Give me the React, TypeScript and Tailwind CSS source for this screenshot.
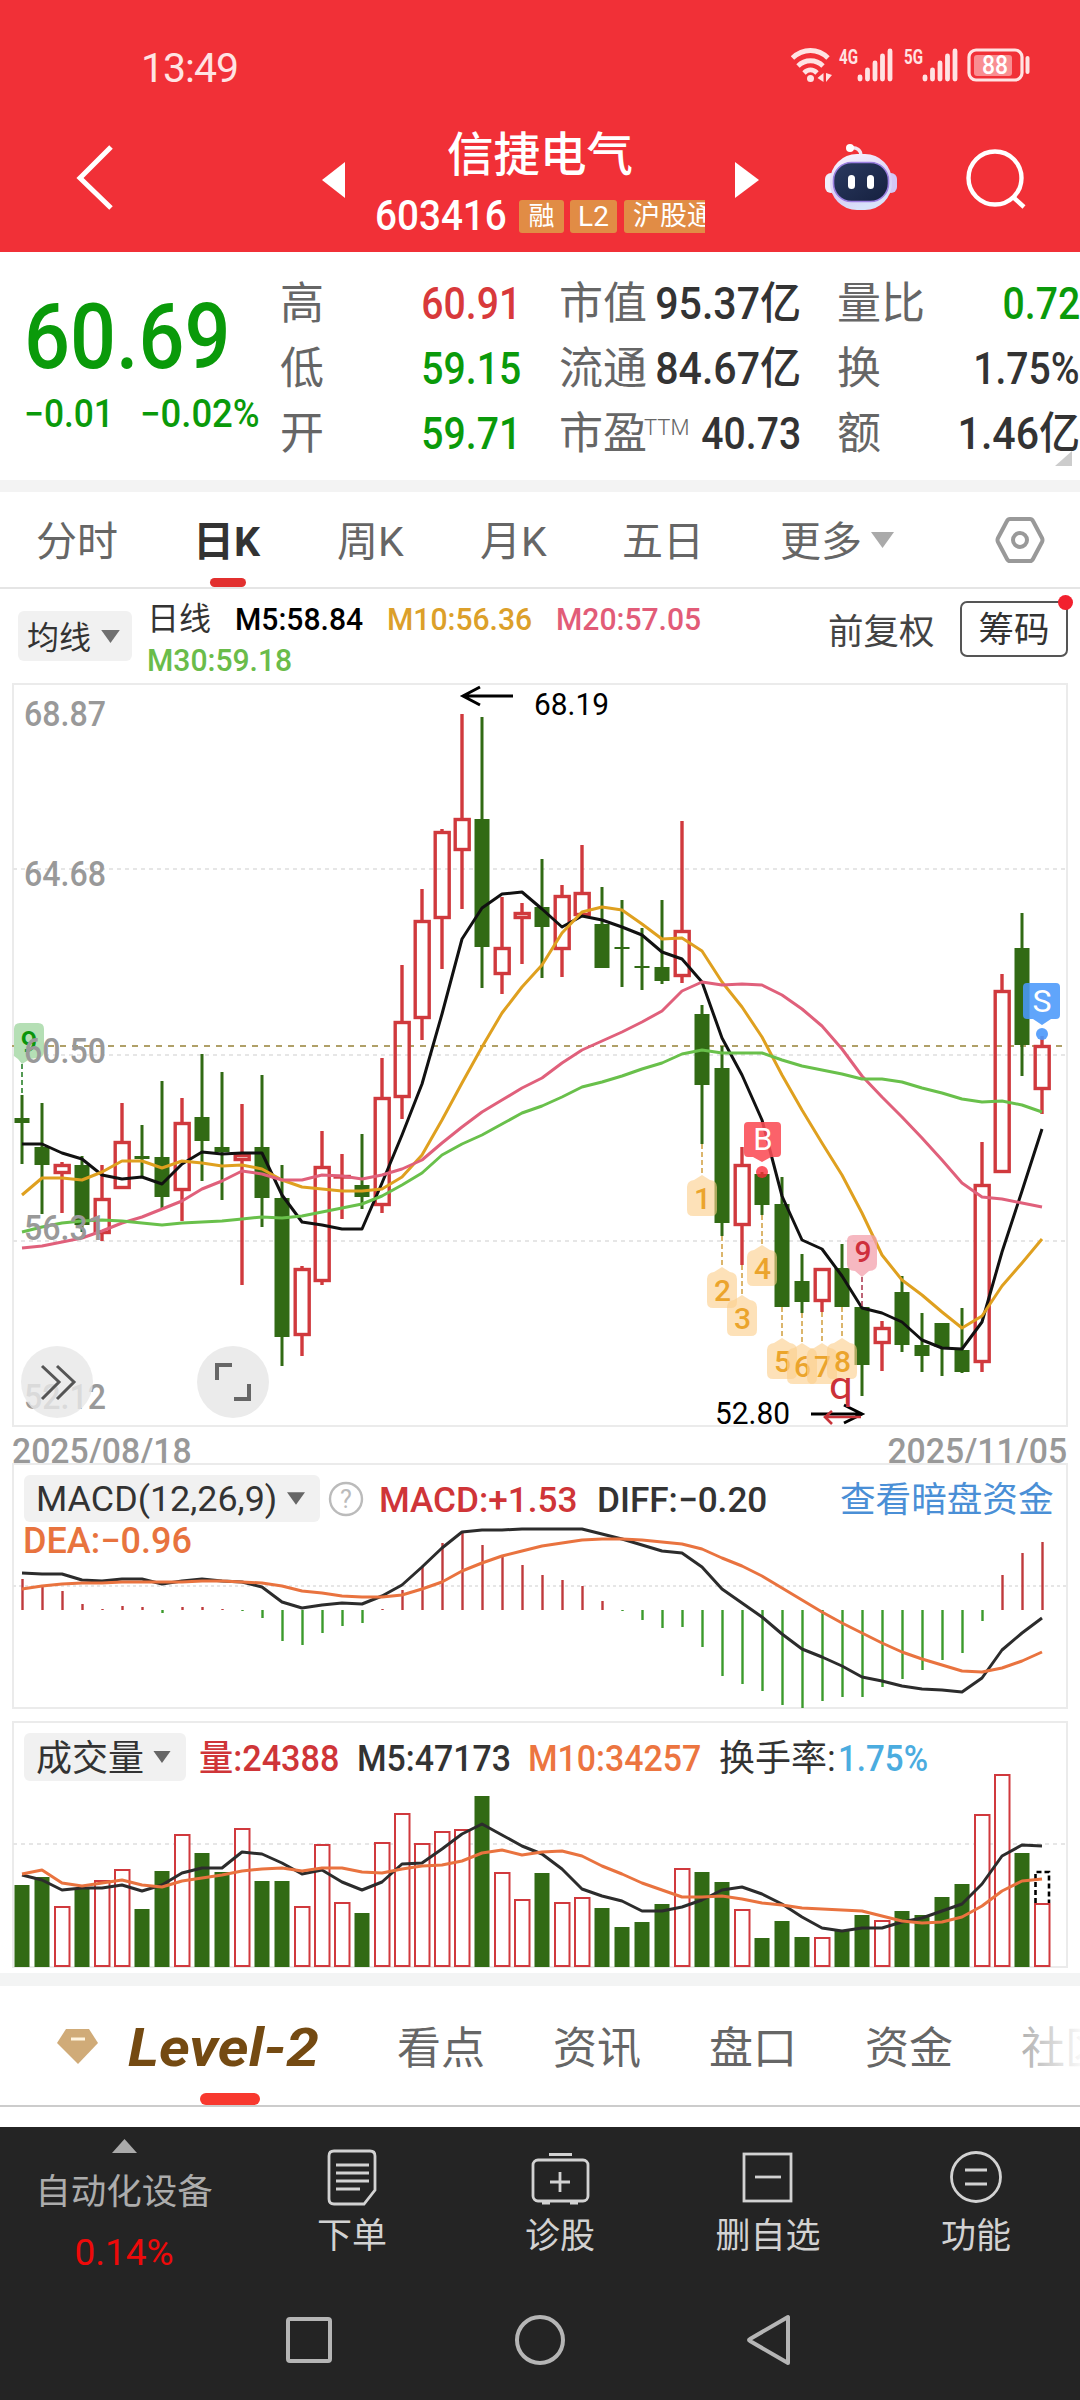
import React from 'react';

type Candle = [number, number, number, number, 0 | 1];

// high, body top, body bottom, low, 1 = up / 0 = down
const CANDLES: Candle[] = [
  [1095, 1118, 1123, 1164, 0], [1103, 1147, 1165, 1214, 0], [1162, 1164, 1174, 1213, 1], [1156, 1165, 1225, 1232, 0],
  [1165, 1198, 1234, 1241, 1], [1103, 1141, 1189, 1189, 1], [1125, 1156, 1159, 1177, 0], [1081, 1157, 1197, 1209, 0],
  [1098, 1122, 1191, 1221, 1], [1054, 1117, 1141, 1181, 0], [1072, 1147, 1152, 1200, 0], [1104, 1154, 1161, 1285, 1],
  [1075, 1147, 1198, 1227, 0], [1165, 1198, 1337, 1366, 0], [1266, 1268, 1336, 1356, 1], [1131, 1166, 1282, 1285, 1],
  [1154, 1175, 1178, 1219, 1], [1134, 1185, 1197, 1209, 0], [1058, 1097, 1206, 1213, 1], [965, 1021, 1098, 1119, 1],
  [889, 920, 1019, 1040, 1], [829, 831, 919, 969, 1], [714, 818, 851, 909, 1], [717, 819, 947, 988, 0],
  [897, 947, 975, 994, 1], [903, 912, 919, 964, 1], [859, 907, 927, 978, 0], [885, 895, 950, 977, 1],
  [845, 892, 916, 916, 1], [887, 924, 968, 968, 0], [900, 947, 949, 987, 0], [928, 966, 968, 990, 0],
  [900, 967, 981, 984, 0], [821, 930, 977, 983, 1], [1005, 1014, 1085, 1144, 0], [1046, 1068, 1223, 1236, 0],
  [1147, 1164, 1226, 1265, 1], [1172, 1174, 1205, 1215, 0], [1177, 1204, 1307, 1307, 0], [1254, 1281, 1302, 1313, 0],
  [1268, 1268, 1302, 1312, 1], [1244, 1268, 1307, 1307, 0], [1307, 1307, 1365, 1396, 0], [1321, 1327, 1344, 1371, 1],
  [1276, 1292, 1345, 1352, 0], [1313, 1345, 1356, 1372, 0], [1323, 1323, 1347, 1376, 0], [1308, 1350, 1372, 1373, 0],
  [1142, 1184, 1363, 1372, 1], [974, 990, 1173, 1173, 1], [913, 948, 1045, 1076, 0], [1036, 1045, 1090, 1114, 1],
];

const MA5 = [1144, 1144, 1153, 1159, 1175, 1179, 1177, 1184, 1164, 1152, 1154, 1153, 1153, 1195, 1222, 1225, 1229, 1229, 1183, 1135, 1084, 1014, 939, 908, 894, 892, 909, 927, 916, 920, 927, 935, 952, 959, 982, 1038, 1075, 1120, 1196, 1240, 1249, 1276, 1308, 1313, 1322, 1340, 1348, 1349, 1322, 1252, 1191, 1129];
const MA10 = [1195, 1178, 1178, 1180, 1172, 1161, 1161, 1168, 1161, 1163, 1166, 1165, 1169, 1180, 1187, 1189, 1191, 1191, 1189, 1177, 1155, 1120, 1083, 1047, 1013, 987, 965, 933, 912, 907, 910, 924, 939, 938, 951, 982, 1007, 1037, 1075, 1110, 1143, 1175, 1213, 1255, 1280, 1295, 1312, 1328, 1316, 1286, 1263, 1239];
const MA20 = [1248, 1246, 1242, 1238, 1231, 1223, 1217, 1209, 1201, 1189, 1181, 1171, 1174, 1180, 1180, 1175, 1176, 1179, 1175, 1169, 1160, 1143, 1127, 1112, 1100, 1088, 1078, 1063, 1050, 1041, 1032, 1022, 1011, 991, 982, 985, 984, 985, 995, 1009, 1026, 1049, 1076, 1097, 1117, 1138, 1160, 1183, 1197, 1199, 1203, 1207];
const MA30 = [1232, 1227, 1223, 1221, 1220, 1221, 1223, 1225, 1223, 1222, 1221, 1219, 1217, 1218, 1216, 1212, 1208, 1204, 1196, 1185, 1173, 1155, 1144, 1135, 1124, 1113, 1106, 1097, 1087, 1082, 1076, 1069, 1063, 1054, 1050, 1053, 1053, 1053, 1060, 1066, 1070, 1074, 1079, 1079, 1082, 1088, 1093, 1099, 1102, 1101, 1105, 1112];

const MACD = [1579, 1587, 1591, 1604, 1609, 1606, 1607, 1613, 1607, 1607, 1609, 1611, 1618, 1641, 1645, 1633, 1626, 1623, 1609, 1590, 1567, 1543, 1533, 1545, 1557, 1565, 1575, 1580, 1586, 1601, 1611, 1620, 1628, 1627, 1647, 1676, 1684, 1691, 1705, 1708, 1701, 1697, 1697, 1687, 1679, 1670, 1660, 1653, 1621, 1575, 1553, 1542];
const DIFF = [1573, 1574, 1574, 1580, 1581, 1579, 1579, 1584, 1581, 1579, 1581, 1582, 1587, 1602, 1608, 1605, 1603, 1604, 1596, 1585, 1567, 1548, 1532, 1530, 1530, 1529, 1529, 1529, 1529, 1534, 1539, 1545, 1551, 1553, 1567, 1589, 1603, 1617, 1634, 1649, 1657, 1666, 1677, 1681, 1686, 1689, 1690, 1692, 1678, 1650, 1633, 1618];
const DEA = [1589, 1586, 1584, 1583, 1583, 1582, 1582, 1582, 1582, 1581, 1581, 1582, 1583, 1586, 1591, 1593, 1596, 1597, 1597, 1595, 1589, 1582, 1571, 1563, 1556, 1551, 1546, 1543, 1540, 1539, 1539, 1540, 1542, 1544, 1549, 1558, 1566, 1576, 1588, 1600, 1612, 1623, 1633, 1643, 1652, 1659, 1665, 1671, 1672, 1668, 1661, 1652];

const VOLUME = [1885, 1877, 1907, 1888, 1881, 1870, 1909, 1871, 1835, 1853, 1872, 1829, 1881, 1881, 1907, 1845, 1903, 1913, 1843, 1814, 1844, 1832, 1830, 1796, 1873, 1900, 1873, 1903, 1898, 1908, 1927, 1922, 1904, 1869, 1872, 1882, 1910, 1938, 1921, 1937, 1938, 1931, 1915, 1921, 1911, 1915, 1897, 1884, 1815, 1775, 1853, 1904];
const VOL5 = [1875, 1880, 1890, 1888, 1888, 1885, 1891, 1885, 1873, 1868, 1868, 1852, 1854, 1863, 1874, 1870, 1882, 1890, 1882, 1864, 1863, 1849, 1834, 1824, 1835, 1846, 1854, 1869, 1889, 1896, 1901, 1911, 1911, 1907, 1900, 1890, 1887, 1894, 1904, 1917, 1928, 1931, 1928, 1928, 1922, 1918, 1911, 1904, 1884, 1856, 1845, 1846];
const VOL10 = [1874, 1870, 1883, 1886, 1883, 1880, 1885, 1887, 1881, 1878, 1875, 1871, 1869, 1868, 1871, 1868, 1868, 1872, 1873, 1869, 1866, 1865, 1861, 1853, 1850, 1855, 1852, 1851, 1856, 1866, 1874, 1883, 1890, 1897, 1897, 1896, 1899, 1903, 1905, 1908, 1909, 1910, 1911, 1916, 1921, 1923, 1922, 1917, 1906, 1891, 1881, 1879];

// nine-turn count tags: label, candle index, tag tip
const COUNTS: [string, number, number][] = [
  ['1', 34, 1175], ['2', 35, 1267], ['3', 36, 1295], ['4', 37, 1245],
  ['5', 38, 1338], ['6', 39, 1343], ['7', 40, 1343], ['8', 41, 1338],
];

const AXIS: [string, number][] = [['68.87', 726], ['64.68', 886], ['60.50', 1063], ['56.31', 1240], ['52.12', 1409]];

const RED = '#d0393d';
const GREEN = '#316a14';

const cx = (i: number) => 22 + i * 20;
const toPoints = (ys: number[]) => ys.map((y, i) => `${cx(i)},${y}`).join(' ');

const Curve: React.FC<{ data: number[]; color: string }> = ({ data, color }) => (
  <polyline points={toPoints(data)} fill="none" stroke={color} strokeWidth="3" strokeLinejoin="round" />
);

const Caret: React.FC<{ className?: string }> = ({ className }) => (
  <svg className={className} viewBox="0 0 20 14"><path d="M0 0h20L10 14z" fill="currentColor" /></svg>
);

const StatusBar = () => (
  <div className="h-[112px] flex items-start pl-[141px] pr-[49px] pt-[46px] text-[#ffe3e3]">
    <span className="text-[41px] leading-[42px] w-[120px] mt-px tracking-[-1px]">13:49</span>
    <div className="flex ml-auto mt-[2px]">
      <svg className="w-[44px] h-[34px] mr-[2px]" viewBox="0 0 44 34" fill="none" stroke="currentColor" strokeWidth="4.800">
        <path d="M1.500 10C12 0 27 0 37 10M7 18C14 11 25 11 32 18M13 25C17 21 22 21 26 25" />
        <circle cx="19.500" cy="30.500" r="3.500" fill="currentColor" stroke="none" />
        <path d="M32.500 25v9l-6-4zM35 25v9l6-7z" fill="currentColor" stroke="none" />
      </svg>
      <Signal label="4G" />
      <Signal label="5G" />
      <svg className="w-[64px] h-[34px]" viewBox="0 0 64 34" fill="none" stroke="currentColor" strokeWidth="3.200">
        <rect x="2" y="2" width="53" height="30" rx="7" />
        <rect x="7" y="7" width="38" height="21" rx="3" fill="#f98e91" stroke="none" />
        <path d="M60.500 10v14" strokeWidth="4" strokeLinecap="round" />
        <text x="28" y="26" textAnchor="middle" fontSize="25" fontWeight="500" textLength="26" lengthAdjust="spacingAndGlyphs" fill="#fff" stroke="none">88</text>
      </svg>
    </div>
  </div>
);

const Signal: React.FC<{ label: string }> = ({ label }) => (
  <svg className="w-[65px] h-[34px]" viewBox="0 0 65 34">
    <text x="2" y="15.500" fontSize="20" fontWeight="700" textLength="19" lengthAdjust="spacingAndGlyphs" fill="currentColor">{label}</text>
    <path d="M23 31v-2M30.500 31v-9M38 31v-16M45.500 31v-23M53 31v-28" stroke="currentColor" strokeWidth="4.800" strokeLinecap="round" />
  </svg>
);

const Header = () => (
  <div className="h-[140px] relative flex text-white">
    <svg className="w-[40px] h-[68px] ml-[75px] mt-[31px]" viewBox="0 0 40 68"><path d="M36 4L5 35l31 30" fill="none" stroke="currentColor" strokeWidth="5" /></svg>
    <svg className="w-[23px] h-[36px] ml-[207px] mt-[50px]" viewBox="0 0 23 36"><path d="M23 0v36L0 18z" fill="currentColor" /></svg>
    <div className="w-[390px] flex flex-col">
      <div className="text-[46.5px] leading-[50px] font-medium text-center mt-[18px]">信捷电气</div>
      <div className="flex items-center h-[34px] mt-[19px] pl-[30px] w-[360px] overflow-hidden whitespace-nowrap">
        <div className="w-[144px] shrink-0 text-[42px] leading-[34px] font-medium"><span className="inline-block origin-left scale-x-[.92]">603416</span></div>
        <div className="w-[45px] h-[33px] shrink-0 rounded-[3px] bg-[#e18c45] text-[26px] leading-[32px] text-center">融</div>
        <div className="w-[47px] h-[33px] shrink-0 rounded-[3px] bg-[#e18c45] text-[28px] leading-[33px] text-center ml-[6px]">L2</div>
        <div className="w-[100px] h-[33px] shrink-0 rounded-l-[3px] bg-[#e18c45] text-[27px] leading-[32px] pl-[9px] ml-[7px]">沪股通</div>
      </div>
    </div>
    <svg className="w-[24px] h-[36px] mt-[50px]" viewBox="0 0 24 36"><path d="M0 0v36l24-18z" fill="currentColor" /></svg>
    <svg className="w-[76px] h-[72px] ml-[64px] mt-[30px]" viewBox="0 0 76 72">
      <defs>
        <linearGradient id="shell" x1="0" y1="0" x2="0.4" y2="1"><stop offset="0" stopColor="#fbf7fd" /><stop offset="0.7" stopColor="#d9cdf6" /><stop offset="1" stopColor="#d8e2fa" /></linearGradient>
        <linearGradient id="face" x1="0" y1="0" x2="1" y2="1"><stop offset="0" stopColor="#2b3a60" /><stop offset="1" stopColor="#15203f" /></linearGradient>
      </defs>
      <path d="M38 14C38 8 34 5 27 6" fill="none" stroke="#f3e6f2" strokeWidth="3.400" strokeLinecap="round" />
      <circle cx="27" cy="6" r="4" fill="#fff" />
      <rect x="2" y="31" width="12" height="20" rx="6" fill="#f1effb" />
      <rect x="62" y="31" width="12" height="20" rx="6" fill="#d3c7f5" />
      <rect x="7" y="12" width="62" height="56" rx="27" fill="url(#shell)" />
      <rect x="10.500" y="20.500" width="55" height="39" rx="18" fill="url(#face)" stroke="#9b7fe0" strokeWidth="1.600" />
      <rect x="25" y="33" width="7" height="14" rx="3.500" fill="#fff" />
      <rect x="44" y="33" width="7" height="14" rx="3.500" fill="#fff" />
    </svg>
    <svg className="w-[64px] h-[64px] ml-[64px] mt-[36px]" viewBox="0 0 64 64" fill="none" stroke="currentColor" strokeWidth="4.400">
      <circle cx="32" cy="30" r="26.500" /><path d="M50 49l11 10" />
    </svg>
  </div>
);

const Quote: React.FC<{ label: string; value: string; color?: string; sup?: string }> = ({ label, value, color = 'text-[#333]', sup }) => (
  <div className="h-[65px] flex items-center justify-between whitespace-nowrap">
    <span className="text-[44px] leading-none text-[#666] -mr-[10px]">{label}{sup && <sup className="text-[22px] font-light top-[-14px] -ml-[3px]">{sup}</sup>}</span>
    <span className={`text-[44px] leading-none font-medium inline-block origin-right ${value.includes('亿') ? 'scale-x-[.935]' : 'scale-x-[.89]'} ${color}`}>{value}</span>
  </div>
);

const QuotePanel = () => (
  <div className="h-[228px] relative flex bg-white overflow-hidden">
    <div className="w-[280px] pl-[24px] text-[#0a9a0a] whitespace-nowrap">
      <div className="text-[91px] leading-[66px] font-medium mt-[52px] origin-left scale-x-[.89]">60.69</div>
      <div className="flex text-[38px] leading-[40px] mt-[24px] font-medium">
        <span className="w-[116px]"><span className="inline-block origin-left scale-x-[.93]">−0.01</span></span>
        <span className="inline-block origin-left scale-x-[.96]">−0.02%</span>
      </div>
    </div>
    <div className="w-[241px] pt-[19px]">
      <Quote label="高" value="60.91" color="text-[#d8393b]" />
      <Quote label="低" value="59.15" color="text-[#0a9a0a]" />
      <Quote label="开" value="59.71" color="text-[#0a9a0a]" />
    </div>
    <div className="w-[242px] ml-[38px] pt-[19px]">
      <Quote label="市值" value="95.37亿" />
      <Quote label="流通" value="84.67亿" />
      <Quote label="市盈" sup="TTM" value="40.73" />
    </div>
    <div className="w-[243px] shrink-0 ml-[36px] pt-[19px]">
      <Quote label="量比" value="0.72" color="text-[#0a9a0a]" />
      <Quote label="换" value="1.75%" />
      <Quote label="额" value="1.46亿" />
    </div>
    <svg className="absolute right-[8px] bottom-[14px] w-[17px] h-[15px]" viewBox="0 0 17 15"><path d="M17 0v15H0z" fill="#ccc" /></svg>
  </div>
);

const PeriodTabs = () => (
  <div className="h-[97px] flex items-center border-b-2 border-[#e5e5e5] bg-white text-[41px] text-[#666] pl-[36px] whitespace-nowrap leading-none">
    <span className="w-[158px] mt-[5px]">分时</span>
    <div className="w-[143px] h-full relative flex items-center font-bold text-[#333] pt-[5px]">
      <span className="-ml-px">日K</span>
      <div className="absolute left-[16px] bottom-0 w-[36px] h-[9px] rounded-[5px] bg-[#e2302f]" />
    </div>
    <span className="w-[143px] mt-[5px]">周K</span>
    <span className="w-[142px] mt-[5px]">月K</span>
    <span className="w-[158px] mt-[5px]">五日</span>
    <span className="w-[91px] mt-[5px]">更多</span>
    <Caret className="w-[23px] h-[18px] text-[#aaa]" />
    <svg className="w-[50px] h-[48px] ml-[101px]" viewBox="0 0 50 48" fill="none" stroke="#999" strokeWidth="4">
      <path d="M15 3h20q2 0 3 2l9 17q1 2 0 4l-9 17q-1 2-3 2H15q-2 0-3-2L3 26q-1-2 0-4l9-17q1-2 3-2z" />
      <circle cx="25" cy="24" r="7" />
    </svg>
  </div>
);

const MaLegend = () => (
  <div className="h-[94px] flex bg-white pl-[18px] whitespace-nowrap">
    <div className="w-[114px] h-[50px] mt-[22px] rounded-[6px] bg-[#f1f1f1] flex items-center pl-[9px] text-[32px] text-[#333]">
      <span className="mt-[3px]">均线</span><Caret className="w-[19px] h-[13px] ml-[10px] text-[#707070]" />
    </div>
    <div className="w-[696px] pl-[15px] pt-[10px] text-[32px] leading-[41px] font-medium">
      <div className="flex">
        <span className="w-[88px] font-normal text-[#333]">日线</span>
        <span className="w-[152px] text-black"><span className="inline-block origin-left scale-x-[.94]">M5:58.84</span></span>
        <span className="w-[169px] text-[#dca02a]"><span className="inline-block origin-left scale-x-[.94]">M10:56.36</span></span>
        <span className="text-[#e25c78]"><span className="inline-block origin-left scale-x-[.94]">M20:57.05</span></span>
      </div>
      <div className="text-[#6abc4a]"><span className="inline-block origin-left scale-x-[.94]">M30:59.18</span></div>
    </div>
    <span className="w-[132px] text-[35.500px] leading-[86px] text-[#444]">前复权</span>
    <div className="relative w-[108px] h-[56px] mt-[12px] border-2 border-[#555] rounded-[7px] text-[35.500px] leading-[54px] text-center text-[#333]">
      筹码
      <div className="absolute -right-[7px] -top-[8px] w-[15px] h-[15px] rounded-full bg-[#f2202e]" />
    </div>
  </div>
);

const KLineChart = () => (
  <svg className="block w-[1080px] h-[744px]" viewBox="0 683 1080 744">
    <rect x="13" y="684" width="1054" height="742" fill="none" stroke="#ebebeb" strokeWidth="2" />
    {[869, 1055, 1241].map(y => (
      <path key={y} d={`M13 ${y}h1054`} stroke="#e6e6e6" strokeWidth="2" strokeDasharray="4 4" />
    ))}
    <path d="M12 1046h1054" stroke="#b0a068" strokeWidth="2" strokeDasharray="6 6" />

    <path d="M14 1029q0-6 6-6h18q6 0 6 6v22q0 6-6 7l-8 1-8 5-4-5-4-3z" fill="#b5dfb5" />
    <text x="29" y="1052" textAnchor="middle" fontSize="30" fontWeight="500" fill="#0b950b">9</text>
    <path d="M22 1064v31" stroke="#1c7a1c" strokeWidth="1.500" strokeDasharray="5 3" />

    {CANDLES.map(([high, top, bottom, low, up], i) => {
      const x = cx(i);
      return up ? (
        <g key={i} stroke={RED} strokeWidth="3.400" fill="none">
          <path d={`M${x} ${high}V${top}M${x} ${bottom}V${low}`} />
          <rect x={x - 6.8} y={top + 1.500} width="14" height={Math.max(bottom - top - 3, 0.5)} />
        </g>
      ) : (
        <g key={i} fill={GREEN}>
          <rect x={x - 1.500} y={high} width="3" height={low - high} />
          <rect x={x - 7.500} y={top} width="15" height={bottom - top} />
        </g>
      );
    })}

    <Curve data={MA5} color="#111" />
    <Curve data={MA10} color="#dfa01f" />
    <Curve data={MA20} color="#e0607b" />
    <Curve data={MA30} color="#69c04b" />

    {COUNTS.map(([n, i, tip]) => {
      const x = cx(i);
      return (
        <g key={n}>
          <path d={`M${x} ${CANDLES[i][3]}V${tip}`} stroke="#cf9d3c" strokeWidth="1.500" strokeDasharray="5 3" />
          <path d={`M${x} ${tip}l8 5q7 1 7 7v23q0 6-6 6h-18q-6 0-6-6v-23q0-6 7-7z`} fill="#fbcf8c" fillOpacity="0.62" />
          <text x={x + 0.500} y={tip + 34} textAnchor="middle" fontSize="30" fontWeight="500" fill="#eba42c">{n}</text>
        </g>
      );
    })}

    <path d="M862 1277l-7-6q-8 0-8-7v-23q0-6 6-6h18q6 0 6 6v23q0 7-8 7z" fill="#f3a0ac" fillOpacity="0.75" />
    <text x="863" y="1262" textAnchor="middle" fontSize="30" fontWeight="500" fill="#cf2f3c">9</text>
    <path d="M862 1277v30" stroke="#a8324a" strokeWidth="1.500" strokeDasharray="5 3" />

    <path d="M762 1162l-9-5h-5q-4 0-4-4v-27q0-4 4-4h29q4 0 4 4v27q0 4-4 4h-6z" fill="#fb4c55" fillOpacity="0.88" />
    <text x="763" y="1150" textAnchor="middle" fontSize="31" fill="#fff">B</text>
    <circle cx="762" cy="1172" r="6" fill="#fb2c38" fillOpacity="0.8" />

    <path d="M1042 1025l-9-6h-6q-4 0-4-4v-28q0-4 4-4h29q4 0 4 4v28q0 4-4 4h-5z" fill="#4a98fb" fillOpacity="0.88" />
    <text x="1042" y="1012" textAnchor="middle" fontSize="32" fill="#fff">S</text>
    <circle cx="1042" cy="1034" r="6" fill="#4a98fb" fillOpacity="0.9" />

    {AXIS.map(([label, y]) => (
      <text key={label} x="24" y={y} fontSize="35.500" fontWeight="500" textLength="82" lengthAdjust="spacingAndGlyphs" fill="#999">{label}</text>
    ))}

    <path d="M463 696h50M480 687l-17 9 17 9" stroke="#000" strokeWidth="3" fill="none" />
    <text x="534" y="715" fontSize="31" textLength="75" lengthAdjust="spacingAndGlyphs">68.19</text>
    <text x="715" y="1424" fontSize="31" textLength="75" lengthAdjust="spacingAndGlyphs">52.80</text>
    <path d="M811 1414h51M844 1405l18 9-18 9" stroke="#000" strokeWidth="3" fill="none" />
    <path d="M861 1417h-36M832 1411l-7 6 7 7" stroke="#c8343a" strokeWidth="2.600" fill="none" />
    <text x="829" y="1399" fontSize="39" textLength="24" lengthAdjust="spacingAndGlyphs" fill="#cb3138">q</text>

    <circle cx="57" cy="1382" r="36" fill="#e8e8e8" fillOpacity="0.82" />
    <path d="M42 1366l17 16-17 17M57 1366l17 16-17 17" stroke="#555" strokeWidth="3" fill="none" />
    <circle cx="233" cy="1382" r="36" fill="#ebebeb" />
    <path d="M217 1380v-15h15M249 1384v15h-15" stroke="#666" strokeWidth="4" fill="none" />
  </svg>
);

const MacdPanel = () => (
  <div className="relative h-[246px] whitespace-nowrap">
    <svg className="absolute inset-0 w-full h-full" viewBox="0 1463 1080 246">
      <rect x="13" y="1464" width="1054" height="244" fill="none" stroke="#ebebeb" strokeWidth="2" />
      <path d="M13 1586h1054" stroke="#e6e6e6" strokeWidth="2" strokeDasharray="3 3" />
      {MACD.map((y, i) => (
        <path key={i} d={`M${cx(i) + 0.5} 1610V${y}`} stroke={y < 1610 ? '#bf3a3c' : '#3b9a2c'} strokeWidth="2.400" />
      ))}
      <Curve data={DIFF} color="#2c2c2c" />
      <Curve data={DEA} color="#e9733f" />
    </svg>
    <div className="relative flex items-center h-[47px] pt-[12px] box-content pl-[24px] text-[35.500px] leading-none font-medium">
      <div className="w-[296px] h-[47px] rounded-[6px] bg-[#f1f1f1] flex items-center pl-[12px] font-normal text-[#333]">
        <span className="w-[251px] mt-[3px]"><span className="inline-block origin-left scale-x-[1.01]">MACD(12,26,9)</span></span>
        <Caret className="w-[18px] h-[13px] text-[#666]" />
      </div>
      <svg className="w-[36px] h-[36px] ml-[8px]" viewBox="0 0 36 36">
        <circle cx="18" cy="18" r="16" fill="none" stroke="#bbb" strokeWidth="2.400" />
        <text x="18" y="27" textAnchor="middle" fontSize="25" fontWeight="400" fill="#bbb">?</text>
      </svg>
      <span className="w-[218px] ml-[15px] mt-[4px] text-[#cf3538]"><span className="inline-block origin-left scale-x-[.99]">MACD:+1.53</span></span>
      <span className="w-[243px] mt-[4px] text-[#333]"><span className="inline-block origin-left scale-x-[.99]">DIFF:−0.20</span></span>
      <span className="text-[35.600px] mt-[4px] font-normal text-[#4a8fd6]">查看暗盘资金</span>
    </div>
    <div className="relative pl-[23px] pt-px text-[36px] leading-[36px] font-medium text-[#e8733e]"><span className="inline-block origin-left">DEA:−0.96</span></div>
  </div>
);

const VolumePanel = () => (
  <div className="relative h-[251px] mt-[12px] whitespace-nowrap">
    <svg className="absolute inset-0 w-full h-full" viewBox="0 1721 1080 251">
      <rect x="13" y="1722" width="1054" height="245" fill="none" stroke="#ebebeb" strokeWidth="2" />
      <path d="M13 1844h1054" stroke="#e6e6e6" strokeWidth="2" strokeDasharray="4 4" />
      {VOLUME.map((y, i) => CANDLES[i][4] ? (
        <rect key={i} x={cx(i) - 7} y={y} width="14.500" height={1966 - y} fill="#fff" stroke={RED} strokeWidth="2" />
      ) : (
        <rect key={i} x={cx(i) - 7.5} y={y} width="15" height={1967 - y} fill={GREEN} />
      ))}
      <path d="M1035.500 1903v-31h13.500v31" fill="none" stroke="#000" strokeWidth="2.600" strokeDasharray="5 3" />
      <Curve data={VOL5} color="#2c2c2c" />
      <Curve data={VOL10} color="#e9733f" />
    </svg>
    <div className="relative flex items-center h-[48px] pt-[12px] box-content pl-[24px] text-[36px] leading-none font-medium">
      <div className="w-[162px] h-[48px] rounded-[6px] bg-[#f1f1f1] flex items-center pl-[12px] font-normal text-[#333]">
        <span className="mt-[3px]">成交量</span><Caret className="w-[18px] h-[12px] ml-[9px] text-[#666]" />
      </div>
      <span className="w-[158px] ml-[13px] mt-[4px] text-[#cf3538]"><span className="inline-block origin-left scale-x-[.95]">量:24388</span></span>
      <span className="w-[171px] mt-[4px] text-[#333]"><span className="inline-block origin-left scale-x-[.94]">M5:47173</span></span>
      <span className="w-[191px] mt-[4px] text-[#ec7540]"><span className="inline-block origin-left scale-x-[.94]">M10:34257</span></span>
      <span className="w-[119px] mt-[4px] text-[#333] font-normal">换手率:</span>
      <span className="mt-[4px] text-[#4bacdf]"><span className="inline-block origin-left scale-x-[.92]">1.75%</span></span>
    </div>
  </div>
);

const InfoTabs = () => (
  <div className="h-[121px] relative flex items-center bg-white border-b-2 border-[#ccc] pl-[57px] text-[44px] leading-none text-[#666] whitespace-nowrap overflow-hidden">
    <svg className="w-[42px] h-[38px] shrink-0" viewBox="0 0 42 36"><path d="M9 1h23l9 14-20 21L0 15z" fill="#d0ab78" /><path d="M14 11h14" stroke="#fff4e0" strokeWidth="3" /></svg>
    <div className="w-[269px] shrink-0 h-full relative flex items-center ml-[29px] font-bold italic text-[54px] text-[#744a12]">
      <span className="inline-block origin-left scale-x-[1.09] mt-[5px]">Level-2</span>
      <div className="absolute left-[72px] bottom-0 w-[60px] h-[12px] rounded-[6px] bg-[#f8392f]" />
    </div>
    <span className="w-[156px] shrink-0 mt-[6px]">看点</span>
    <span className="w-[156px] shrink-0 mt-[6px]">资讯</span>
    <span className="w-[156px] shrink-0 mt-[6px]">盘口</span>
    <span className="w-[156px] shrink-0 mt-[6px]">资金</span>
    <span className="shrink-0 mt-[6px]">社区</span>
    <div className="absolute right-0 inset-y-0 w-[70px] bg-gradient-to-r from-white/40 to-white/95" />
  </div>
);

const NavItem: React.FC<{ label: string; children: React.ReactNode }> = ({ label, children }) => (
  <div className="w-[208px] flex flex-col items-center pt-[19px]">
    <svg className="w-[60px] h-[62px]" viewBox="0 0 60 62" fill="none" stroke="#d2d2d2" strokeWidth="2.800">{children}</svg>
    <span className="text-[35px] leading-[40px] mt-[9px] text-[#d2d2d2]">{label}</span>
  </div>
);

const BottomNav = () => (
  <div className="h-[273px] bg-[#242424]">
    <div className="h-[168px] flex">
      <div className="w-[248px] flex flex-col items-center pt-[12px]">
        <svg className="w-[25px] h-[14px]" viewBox="0 0 25 14"><path d="M12.500 0L25 14H0z" fill="#aaa" /></svg>
        <span className="text-[35.500px] leading-[42px] mt-[18px] text-[#acacac]">自动化设备</span>
        <span className="text-[37px] leading-[42px] mt-[19px] text-[#ee0a0a]">0.14%</span>
      </div>
      <NavItem label="下单">
        <path d="M12 5h36q5 0 5 5v34L42 58H12q-5 0-5-5V10q0-5 5-5zM14 19h33M14 27h33M14 35h33M14 43h24" />
      </NavItem>
      <NavItem label="诊股">
        <rect x="3" y="14" width="55" height="41" rx="5" />
        <path d="M19 8.500h23M30 26v20M20 36h20M12 57h8M40 57h8" />
      </NavItem>
      <NavItem label="删自选">
        <rect x="6" y="8" width="47" height="47" /><path d="M17 31h26" />
      </NavItem>
      <NavItem label="功能">
        <circle cx="30" cy="31" r="24.500" /><path d="M19 24h22M19 38h22" />
      </NavItem>
    </div>
    <div className="flex items-center h-[90px] pl-[284px]">
      <svg className="w-[50px] h-[50px]" viewBox="0 0 50 50"><rect x="4" y="4" width="42" height="42" rx="2" fill="none" stroke="#b5b5b5" strokeWidth="4" /></svg>
      <svg className="w-[54px] h-[54px] ml-[179px]" viewBox="0 0 54 54"><circle cx="27" cy="27" r="23" fill="none" stroke="#b5b5b5" strokeWidth="4" /></svg>
      <svg className="w-[46px] h-[54px] ml-[179px]" viewBox="0 0 46 54"><path d="M42 4v46L4 28q-2-1 0-2z" fill="none" stroke="#b5b5b5" strokeWidth="4" strokeLinejoin="round" /></svg>
    </div>
  </div>
);

const App: React.FC = () => (
  <div className="w-[1080px] h-[2400px] overflow-hidden bg-white [font-family:Roboto,'Noto_Sans_CJK_SC',sans-serif]">
    <div className="bg-[#f13037]">
      <StatusBar />
      <Header />
    </div>
    <QuotePanel />
    <div className="h-[12px] bg-[#f3f3f3]" />
    <PeriodTabs />
    <MaLegend />
    <KLineChart />
    <div className="h-[36px] flex items-center justify-between pl-[12px] pr-[13px] text-[35.500px] leading-none font-medium text-[#999]">
      <span className="inline-block origin-left scale-x-[.95] pt-[14px]">2025/08/18</span>
      <span className="inline-block origin-right scale-x-[.95] pt-[14px]">2025/11/05</span>
    </div>
    <MacdPanel />
    <VolumePanel />
    <div className="h-[13px] mt-px bg-[#f3f4f4]" />
    <InfoTabs />
    <div className="h-[20px]" />
    <BottomNav />
  </div>
);

export default App;
